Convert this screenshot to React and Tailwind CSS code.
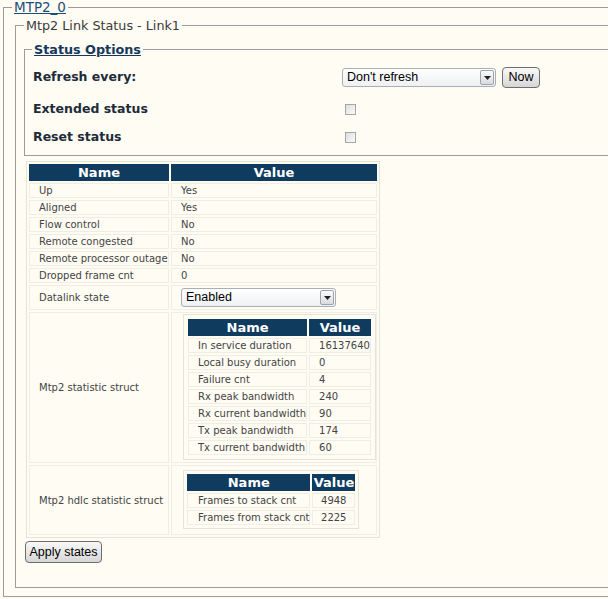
import React from "react";

const mainRows = [
	["Up", "Yes"],
	["Aligned", "Yes"],
	["Flow control", "No"],
	["Remote congested", "No"],
	["Remote processor outage", "No"],
	["Dropped frame cnt", "0"],
];

const statRows = [
	["In service duration", "16137640"],
	["Local busy duration", "0"],
	["Failure cnt", "4"],
	["Rx peak bandwidth", "240"],
	["Rx current bandwidth", "90"],
	["Tx peak bandwidth", "174"],
	["Tx current bandwidth", "60"],
];

const hdlcRows = [
	["Frames to stack cnt", "4948"],
	["Frames from stack cnt", "2225"],
];

function DropArrow() {
	return (
		<span className="flex items-center justify-center w-[14px] h-[15px] border border-[#9ea4ab] rounded-[2px] bg-linear-to-b from-[#fbfbfb] to-[#d9dce0]">
			<svg width="7" height="4" viewBox="0 0 7 4">
				<polygon points="0,0 7,0 3.5,4" fill="#222" />
			</svg>
		</span>
	);
}

function FakeSelect({value, width}) {
	return (
		<div className={`flex items-center justify-between h-[19px] ${width} pl-[4px] pr-[1px] border border-[#a9afb6] rounded-[3px] bg-linear-to-b from-[#ffffff] to-[#eef0f2] font-['Liberation_Sans',Arial,sans-serif] text-[12.5px] text-black`}>
			<span>{value}</span>
			<DropArrow />
		</div>
	);
}

function Checkbox() {
	return <span className="block w-[11px] h-[11px] border border-[#a7a7a7] bg-linear-to-br from-[#dedede] to-[#fbfbfb]"></span>;
}

function GrayButton({children, className = ""}) {
	return (
		<button className={`h-[21px] border border-[#6e6e6e] rounded-[4px] bg-linear-to-b from-[#f9f9f9] to-[#d6d6d6] font-['Liberation_Sans',Arial,sans-serif] text-[12.5px] text-black leading-none whitespace-nowrap ${className}`}>
			{children}
		</button>
	);
}

function HeadCell({children, className = ""}) {
	return <th className={`h-[17px] p-0 bg-[#0f3b5e] text-white text-[13px] font-bold leading-[17px] text-center ${className}`}>{children}</th>;
}

const cell = "border border-[#f0ede5] leading-[13px] whitespace-nowrap";
const label = "text-[12.5px] font-bold text-[#1d2b3a]";

function App() {
	return (
		<div className="w-[608px] h-[599px] overflow-hidden bg-[#fefcf3] font-['DejaVu_Sans',Verdana,sans-serif]">
			<fieldset className="ml-[3px] w-[660px] border border-[#9c9c9c] pb-[8px]">
				<legend className="ml-[8px] px-[2px] text-[13.5px] leading-[15px] text-[#1d4f78] underline">MTP2_0</legend>

				<fieldset className="mt-[3px] ml-[11px] border border-[#9c9c9c] pb-[24px]">
					<legend className="ml-[8px] px-[2px] text-[12.75px] leading-[15px] text-[#3a3a3a]">Mtp2 Link Status - Link1</legend>

					{/* Status options */}
					<fieldset className="mt-[9px] ml-[8px] border border-[#9c9c9c] pb-[8px]">
						<legend className="ml-[7px] px-[2px] text-[12.75px] font-bold leading-[15px] text-[#15385c] underline">Status Options</legend>

						<div className="pl-[8px]">
							<div className="mt-[9px] h-[23px] flex items-center">
								<span className={`w-[309px] ${label}`}>Refresh every:</span>
								<FakeSelect value="Don't refresh" width="w-[154px]" />
								<GrayButton className="ml-[6px] w-[38px] h-[20px]">Now</GrayButton>
							</div>
							<div className="mt-[10px] h-[20px] flex items-center">
								<span className={`w-[312px] ${label}`}>Extended status</span>
								<Checkbox />
							</div>
							<div className="mt-[8px] h-[20px] flex items-center">
								<span className={`w-[312px] ${label}`}>Reset status</span>
								<Checkbox />
							</div>
						</div>
					</fieldset>

					<table className="mt-[5px] ml-[10px] border border-[#e6e3d9] border-separate border-spacing-[2px] text-[10px] text-[#444]">
						<thead>
							<tr>
								<HeadCell className="w-[140px]">Name</HeadCell>
								<HeadCell className="w-[206px]">Value</HeadCell>
							</tr>
						</thead>
						<tbody>
							{mainRows.map(([name, value]) => (
								<tr key={name}>
									<td className={`${cell} pl-[9px]`}>{name}</td>
									<td className={`${cell} pl-[9px]`}>{value}</td>
								</tr>
							))}
							<tr>
								<td className={`${cell} pl-[9px] align-middle`}>Datalink state</td>
								<td className={`${cell} pl-[9px] py-[2px]`}>
									<FakeSelect value="Enabled" width="w-[155px]" />
								</td>
							</tr>
							<tr>
								<td className={`${cell} pl-[9px] align-middle`}>Mtp2 statistic struct</td>
								<td className={`${cell} pl-[11px] pt-[1px] pb-[2px]`}>
									<table className="border border-[#e6e3d9] p-[2px] border-separate border-spacing-[2px]">
										<thead>
											<tr>
												<HeadCell className="w-[117px]">Name</HeadCell>
												<HeadCell className="w-[62px]">Value</HeadCell>
											</tr>
										</thead>
										<tbody>
											{statRows.map(([name, value]) => (
												<tr key={name}>
													<td className={`${cell} pl-[9px]`}>{name}</td>
													<td className={`${cell} pl-[9px]`}>{value}</td>
												</tr>
											))}
										</tbody>
									</table>
								</td>
							</tr>
							<tr>
								<td className={`${cell} pl-[9px] align-middle`}>Mtp2 hdlc statistic struct</td>
								<td className={`${cell} pl-[11px] pt-[4px] pb-[5px]`}>
									<table className="border border-[#e6e3d9] p-[1px] border-separate border-spacing-[2px]">
										<thead>
											<tr>
												<HeadCell className="w-[123px]">Name</HeadCell>
												<HeadCell className="w-[43px]">Value</HeadCell>
											</tr>
										</thead>
										<tbody>
											{hdlcRows.map(([name, value]) => (
												<tr key={name}>
													<td className={`${cell} pl-[10px]`}>{name}</td>
													<td className={`${cell} pr-[8px] text-right`}>{value}</td>
												</tr>
											))}
										</tbody>
									</table>
								</td>
							</tr>
						</tbody>
					</table>

					<GrayButton className="mt-[3px] ml-[9px] w-[77px] h-[22px]">Apply states</GrayButton>
				</fieldset>
			</fieldset>
		</div>
	);
}

export default App;
